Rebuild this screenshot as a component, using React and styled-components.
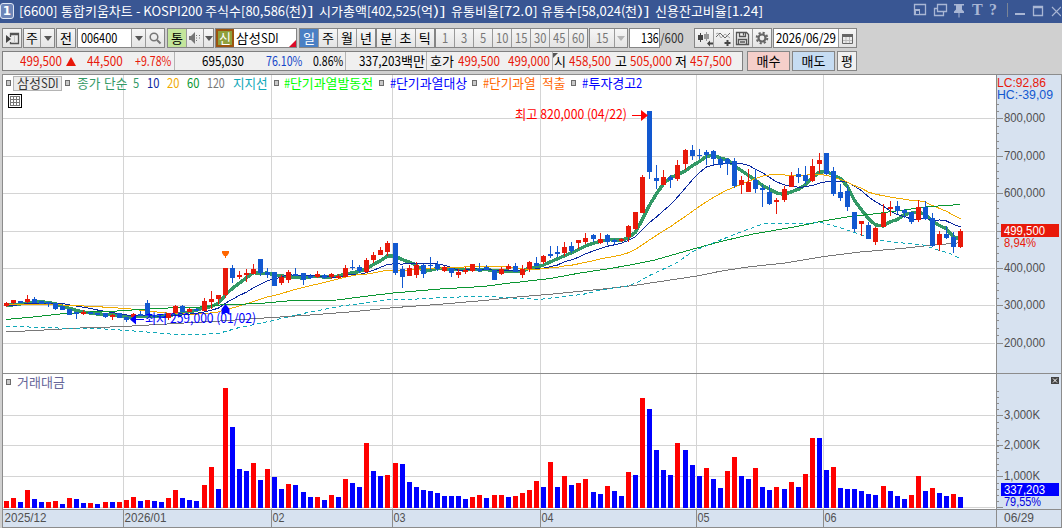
import React, { useLayoutEffect, useRef, useState } from "react";
import styled, { createGlobalStyle, css } from "styled-components";

const FONT = '"Noto Sans CJK KR", "Noto Sans", sans-serif';
const NUM_FONT = '"Liberation Sans", "Noto Sans CJK KR", sans-serif';
const RED = "#e8190a";
const BLUE = "#1258d0";

const GlobalStyle = createGlobalStyle`
  * {
    box-sizing: border-box;
  }
  body {
    margin: 0;
    background: #d0d0d0;
    font-family: ${FONT};
    font-size: 13px;
    overflow: hidden;
  }
`;

const Window = styled.div`
  width: 1062px;
  height: 528px;
  display: flex;
  flex-direction: column;
  background: #d0d0d0;
`;

/* ---------- text ---------- */

const RunBox = styled.span`
  display: inline-block;
  height: 16px;
  line-height: 16px;
  white-space: pre;
  flex: none;
`;

const RunInner = styled.span`
  display: inline-block;
  transform-origin: 0 50%;
  white-space: pre;
`;

const Line = styled.span`
  display: inline-flex;
  flex: none;
  height: 16px;
  font-size: ${(p) => p.$size || 13}px;
  color: ${(p) => p.$color || "inherit"};
  margin-left: ${(p) => p.$ml || 0}px;
`;

const Run = ({ text, width }) => {
  const ref = useRef(null);
  const [scale, setScale] = useState(1);
  useLayoutEffect(() => {
    setScale(width / ref.current.offsetWidth);
  }, [text, width]);
  return (
    <RunBox style={{ width }}>
      <RunInner ref={ref} style={{ transform: `scaleX(${scale})` }}>
        {text}
      </RunInner>
    </RunBox>
  );
};

const Text = ({ children, color, ml, wide = 12, narrow = 6, size }) => {
  const runs = String(children).match(/[가-힣]+|[^가-힣]+/g) || [];
  return (
    <Line $color={color} $ml={ml} $size={size}>
      {runs.map((r, i) => (
        <Run
          key={i}
          text={r}
          width={r.length * (/[가-힣]/.test(r) ? wide : narrow)}
        />
      ))}
    </Line>
  );
};

/* ---------- title bar ---------- */

const TitleBar = styled.div`
  height: 23px;
  flex: none;
  display: flex;
  align-items: center;
  background: #395693;
  color: #fff;
  padding: 0 1px 2px 0;
`;

const Badge = styled.div`
  width: 14px;
  height: 16px;
  margin-right: 5px;
  border: 1px solid #dfe6f4;
  border-radius: 3px;
  background: #6d85b8;
  font: bold 12px/14px "DejaVu Sans", sans-serif;
  text-align: center;
`;

const TitleIcons = styled.svg`
  margin-left: auto;
  flex: none;
`;

/* ---------- toolbar ---------- */

const Toolbar = styled.div`
  display: flex;
  height: 20px;
  flex: none;
  margin: 5px 0 3px 2px;
`;

const Group = styled.div`
  display: flex;
  height: 20px;
  flex: none;
  width: ${(p) => p.$w}px;
  margin-left: ${(p) => p.$ml || 0}px;
  border: 1px solid #858585;
  background: #f0f0f0;
  color: ${(p) => (p.$muted ? "#777" : "#000")};
`;

const Cell = styled.div`
  display: flex;
  align-items: center;
  justify-content: ${(p) => p.$align || "center"};
  ${(p) => (p.$w ? css`width: ${p.$w}px; flex: none;` : css`flex: 1;`)}
  height: 18px;
  padding-left: ${(p) => p.$pl || 0}px;
  background: ${(p) => p.$bg || "linear-gradient(#f6f6f6, #e4e4e4)"};
  color: ${(p) => p.$color || "inherit"};

  & + & {
    border-left: 1px solid ${(p) => (p.$plain ? "transparent" : "#9a9a9a")};
  }
`;

const Total = styled.div`
  display: flex;
  align-items: center;
  width: 34px;
  height: 20px;
  flex: none;
  color: #333;
`;

const StockBadge = styled.div`
  width: 18px;
  height: 18px;
  flex: none;
  display: flex;
  align-items: center;
  justify-content: center;
  border: 2px solid #9c5410;
  background: #8fa03c;
  color: #fff;
`;

const Corner = styled.div`
  width: 0;
  height: 0;
  align-self: flex-end;
  margin-left: auto;
  border-left: 7px solid transparent;
  border-bottom: 7px solid #dc0a28;
`;

const Arrow = styled.i`
  width: 0;
  height: 0;
  border: 4px solid transparent;
  border-bottom: 0;
  border-top: 5px solid ${(p) => (p.$off ? "#b4b4b4" : "#555")};
`;

/* ---------- quote row ---------- */

const QuoteRow = styled.div`
  display: flex;
  height: 20px;
  flex: none;
  margin: 0 0 3px 2px;
`;

const QuoteBox = styled.div`
  display: flex;
  width: 741px;
  height: 20px;
  border: 1px solid #808080;
  background: #f0f0f0;
`;

const Quote = styled.div`
  display: flex;
  align-items: center;
  width: ${(p) => p.$w}px;
  flex: none;
  border-right: 1px solid ${(p) => (p.$last ? "transparent" : "#b4b4b4")};
`;

const UpMark = styled.i`
  border: 5px solid transparent;
  border-top: 0;
  border-bottom: 9px solid ${RED};
  margin: 0 12px 0 4px;
`;

const Notch = styled.i`
  align-self: flex-start;
  border-top: 5px solid #555;
  border-right: 5px solid transparent;
  margin: 1px -4px 0 0;
`;

const OrderButton = styled.div`
  display: flex;
  align-items: center;
  justify-content: center;
  width: ${(p) => p.$w}px;
  height: 20px;
  margin-left: ${(p) => p.$ml}px;
  border: 1px solid #858585;
  background: ${(p) => p.$bg};
`;

/* ---------- chart ---------- */

const Frame = styled.div`
  display: grid;
  grid-template-columns: 993px 66px;
  grid-template-rows: 299px 136px 17px;
  width: 1060px;
  margin-left: 2px;
  border: solid #8c8c8c;
  border-width: 1px 0 1px 1px;

  svg {
    display: block;
    overflow: visible;
  }
`;

const Pane = styled.div`
  position: relative;
  background: #fff;
  border-bottom: 1px solid #8c8c8c;
`;

const Axis = styled.div`
  background: #d7e2f0;
  border: solid #8c8c8c;
  border-width: 0 1px ${(p) => (p.$last ? 0 : 1)}px 1px;
`;

const DateRow = styled.div`
  background: #d7e2f0;
`;

const Legend = styled.div`
  position: absolute;
  top: 0;
  left: 3px;
  display: flex;
  align-items: center;
  height: 15px;
`;

const Bullet = styled.i`
  width: 5px;
  height: 6px;
  flex: none;
  border: 1px solid #6c6c6c;
  background: #c8c8c8;
  margin: 1px 0 0 ${(p) => p.$ml || 0}px;
`;

const NameTag = styled.div`
  display: flex;
  align-items: center;
  width: 49px;
  height: 15px;
  margin: 2px 0 0 2px;
  padding: 0 0 1px 3px;
  border: 1px solid #b4b4b4;
  background: #ececec;
  color: #333;
`;

const GridButton = styled.svg`
  position: absolute;
  left: 5px;
  top: 19px;
`;

// [direction, high row, body top, body bottom, low row]
const CANDLES = `
1 302 303 306 307|1 300 300 303 304|0 301 301 303 303|1 295 299 302 303|0 297 299 303 303
0 301 301 304 304|0 302 302 304 307|0 303 303 309 310|0 306 306 310 310|0 309 309 315 315
0 312 312 314 319|1 310 312 314 315|0 312 312 314 314|0 313 313 315 315|0 313 313 317 318
1 314 315 317 320|0 313 313 318 318|0 317 317 320 322|1 313 314 317 317|0 311 314 316 316
0 300 303 316 316|0 315 315 317 317|0 316 316 318 318|1 313 313 318 320|1 305 306 313 313
0 305 306 312 312|1 308 309 312 312|0 308 309 311 311|1 298 301 311 311|1 291 299 302 309
1 295 295 299 304|1 268 268 295 298|0 265 268 278 283|1 271 275 277 279|1 269 273 275 282
1 264 269 274 274|0 259 259 273 276|0 268 272 275 278|0 272 272 286 286|1 275 277 283 285
1 270 272 280 283|0 268 274 276 276|0 273 273 280 285|0 274 276 278 279|1 271 274 277 278
0 274 275 278 279|1 273 274 277 279|1 274 276 278 279|1 265 268 277 277|0 260 267 268 270
0 265 267 271 273|1 258 260 272 273|1 252 255 260 263|1 247 250 255 255|1 241 243 252 256
0 243 243 273 275|0 266 269 277 288|1 265 268 276 276|1 262 265 275 278|0 264 265 274 278
0 257 265 266 270|0 261 264 269 271|1 266 267 271 272|0 268 268 273 277|1 269 272 275 278
1 267 270 272 274|1 264 264 271 272|0 263 269 271 272|0 265 267 270 270|0 270 270 280 280
1 267 269 274 275|1 264 266 269 270|0 263 266 272 272|1 265 269 275 278|1 261 262 269 272
0 257 263 266 266|1 255 256 262 264|0 246 254 256 258|0 246 252 254 257|1 242 247 253 256
0 242 246 251 253|1 240 240 243 249|1 233 238 242 244|0 234 235 239 242|1 233 239 243 244
0 234 235 242 245|0 239 240 242 245|1 238 239 241 242|1 225 226 237 242|1 212 212 229 230
1 175 177 213 213|0 111 111 172 179|0 165 178 181 189|1 170 177 185 185|0 175 177 180 188
1 160 165 179 181|1 149 150 164 170|0 145 150 156 160|0 149 155 156 159|0 150 152 155 165
0 150 151 159 165|0 157 159 165 168|0 158 159 164 175|0 158 161 186 188|1 176 180 185 194
1 169 182 192 192|0 169 180 189 193|0 185 188 190 207|0 185 192 204 205|1 198 200 202 214
1 186 189 200 202|1 172 176 187 187|0 168 174 177 183|0 166 175 181 184|1 159 166 181 182
1 153 160 164 173|0 153 153 174 175|0 167 171 194 196|0 184 192 198 201|0 186 191 207 211
0 212 212 229 232|1 221 221 224 236|0 222 225 239 239|1 227 228 242 245|1 204 213 227 227
1 201 207 209 216|0 201 206 211 214|0 209 210 213 218|0 212 212 222 224|1 200 207 220 222
0 201 207 219 220|0 213 218 246 247|1 231 234 245 251|0 226 234 238 239|0 232 237 247 253
1 229 231 247 248`
  .trim()
  .split(/[|\n]/)
  .map((c) => c.split(" ").map(Number));

// positive = up day, negative = down day; value is the bar height in thirds of a pixel
const VOLUMES = [
  20, 29, -17, 53, -26, -17, 17, 20, -11, 29, -26, -14, 14, -11, 17, -17, 17,
  23, 32, -20, 23, -20, -17, 29, 53, -29, -23, -20, 68, 122, -56, 359, -242,
  -116, -110, 134, -83, 116, -92, -56, 71, -68, -47, -32, 32, -23, 38, -32, 86,
  -74, -62, 194, -110, -95, 98, 134, -131, -77, -62, -53, -50, -44, -35, -35,
  -35, -26, 32, 38, -29, 38, 38, -32, 35, 44, 53, 80, -62, 137, -62, 95, -68,
  74, 86, -47, -41, 65, -50, -35, 107, -98, 329, -296, -173, -113, -98, 194,
  -173, -128, -95, 119, -86, -59, 110, 152, -95, -86, 119, -62, -53, 62, -56,
  77, -62, 101, 209, -209, -113, 122, -59, -56, -56, -50, -41, -38, 65, -50,
  -35, -26, 38, 95, -50, 59, -44, -35, 41, -32,
];

const barX = (i) => Math.floor(4 + i * 7.073);
const closes = CANDLES.map((c) => (c[0] ? c[2] : c[3]));

const average = (period, head) =>
  closes.map((_, i) => {
    const x = barX(i) + 2.5;
    if (i < period - 1 && head) return [x, head(i)];
    const part = closes.slice(Math.max(0, i - period + 1), i + 1);
    return [x, part.reduce((a, b) => a + b, 0) / part.length];
  });

const toPoints = (list) => list.map(([x, y]) => `${x},${y.toFixed(1)}`).join(" ");

const MA5 = toPoints(average(5, (i) => 305.5 - i * 0.8));
const MA10 = toPoints(average(10, (i) => (i < 3 ? 306 - i * 0.7 : 303.5)));
const MA20 = toPoints(average(20, (i) => 304 + (i * i) / 62));
const MA60 =
  "6,319.5 33,317 60,314 90,312 110,311.5 140,309.5 168,308 200,307 220,305 260,303.5 287,301 337,300 360,297 393,293 440,289 483,286.5 510,283 520,282 550,278.5 580,273 610,268.5 630,265 653,260.5 697,248 720,241.7 753,234 797,226.5 823,221 847,217 873,214 900,210.5 928,206.7 960,204.5";
const MA120 =
  "6,332 35,330.5 80,328 120,326.7 167,324 220,321 260,318.3 310,315 353,311.7 393,307.7 440,304.3 493,299.7 520,296.7 550,294.3 610,288.3 637,285 697,276 720,271.3 750,266.7 783,263.3 823,256.7 857,252.3 903,248.3 927,245.7 950,243.7 960,242.7";
const SUPPORT =
  "6,326.5 43,327.3 73,328.7 100,328.7 120,330 147,332 173,334.3 203,334.3 220,333 240,327.3 260,323.5 303,313.5 343,305.7 373,302 388,299.3 403,300 427,298.3 447,297.3 487,296.3 513,298 540,299.3 563,296.7 587,293.7 600,290 627,286 637,282.7 650,275.3 677,262.7 693,251.3 710,244.3 737,233.3 763,224 787,223.3 807,223.3 822,222.7 843,228.7 857,233.3 877,240 903,243 923,245 937,249.7 950,253.3 960,258.7";

const MONTHS = [
  [3, "2025/12", 42],
  [123, "2026/01", 42],
  [271, "02", 12],
  [392, "03", 12],
  [540, "04", 12],
  [696, "05", 12],
  [823, "06", 12],
];
const PRICE_ROWS = [118, 156, 193, 231, 268, 305, 343];
const VOLUME_ROWS = [415, 445, 476, 507];

const Label = ({ x, y, w, fill = "#505050", korean, children }) => (
  <text
    x={x}
    y={y}
    fill={fill}
    fontSize={korean ? 13 : 13.5}
    fontFamily={korean ? FONT : NUM_FONT}
    textLength={w}
    lengthAdjust="spacingAndGlyphs"
  >
    {children}
  </text>
);

const Grid = ({ rows, top, bottom }) => (
  <g fill="#d4d4d4" shapeRendering="crispEdges">
    {rows.map((y) => (
      <rect key={y} x="3" y={y} width="992" height="1" />
    ))}
    {MONTHS.slice(1).map(([x]) => (
      <rect key={x} x={x} y={top} width="1" height={bottom - top} />
    ))}
  </g>
);

const PriceChart = () => (
  <svg width="993" height="298" viewBox="3 75 993 298">
    <Grid rows={PRICE_ROWS} top={75} bottom={373} />
    <g fill="none" shapeRendering="crispEdges">
      <polyline points={MA5} stroke="#339966" strokeWidth="3.4" />
      <polyline points={MA10} stroke="#0a28a0" />
      <polyline points={MA20} stroke="#f0aa00" />
      <polyline points={MA60} stroke="#0a9632" />
      <polyline points={MA120} stroke="#787878" />
      <polyline points={SUPPORT} stroke="#10a8b8" strokeDasharray="4 3" />
    </g>
    <g shapeRendering="crispEdges">
      {CANDLES.map(([up, high, top, bottom, low], i) => (
        <g key={i} fill={up ? RED : BLUE}>
          <rect x={barX(i) + 2} y={high} width="1" height={low - high} />
          <rect x={barX(i)} y={top} width="5" height={bottom - top} />
        </g>
      ))}
    </g>
    <path d="M222 251h7v2l-2 3h-1v2h-1v-2h-1l-2-3z" fill="#ff6600" />
    <path d="M225.500 304l4 5v5h-2v-1h-4v1h-2v-5z" fill="#0000ff" />
    <path d="M130 319.500l6-5v4.500h8v1h-8v4.500z" fill="#0000ff" />
    <Label x={145} y={323} w={111} fill="#0000ff" korean>
      최저 259,000 (01/02)
    </Label>
    <Label x={515} y={119} w={112} fill="#ff0000" korean>
      최고 820,000 (04/22)
    </Label>
    <path d="M648 115.500l-7-5.500v5h-9v1h9v5z" fill="#ff0000" />
  </svg>
);

const VolumeChart = () => (
  <svg width="993" height="135" viewBox="3 374 993 135">
    <Grid rows={VOLUME_ROWS} top={374} bottom={509} />
    <g shapeRendering="crispEdges">
      {VOLUMES.map((v, i) => {
        const h = Math.round((Math.abs(v) + 1) / 3);
        return (
          <rect
            key={i}
            x={barX(i)}
            y={508 - h}
            width="5"
            height={h}
            fill={v > 0 ? "#ff0000" : "#0000ff"}
          />
        );
      })}
    </g>
  </svg>
);

const Ticks = ({ major, minor }) => (
  <g fill="#8c8c8c" shapeRendering="crispEdges">
    {major.map((y) => (
      <rect key={y} x="997" y={y} width="6" height="1" />
    ))}
    {minor.map((y) => (
      <rect key={y} x="997" y={y} width="2" height="1" />
    ))}
  </g>
);

const range = (from, to, step) => {
  const out = [];
  for (let v = from; v <= to; v += step) out.push(Math.round(v));
  return out;
};

const PriceAxis = () => (
  <svg width="64" height="298" viewBox="997 75 64 298">
    <Ticks major={PRICE_ROWS} minor={range(103.5, 343, 7.48)} />
    <Label x={997} y={87} w={49} fill={RED}>LC:92,86</Label>
    <Label x={997} y={99} w={56} fill={BLUE}>HC:-39,09</Label>
    {[800, 700, 600, null, 400, 300, 200].map(
      (p, i) =>
        p && (
          <Label key={p} x={1004} y={PRICE_ROWS[i] + 4} w={41}>
            {`${p},000`}
          </Label>
        )
    )}
    <rect x="1001" y="224" width="58" height="13" fill={RED} />
    <Label x={1004} y={235} w={41} fill="#fff">499,500</Label>
    <Label x={1004} y={247} w={32} fill={RED}>8,94%</Label>
  </svg>
);

const VolumeAxis = () => (
  <svg width="64" height="135" viewBox="997 374 64 135">
    <Ticks major={VOLUME_ROWS} minor={range(391, 506, 6.1)} />
    <rect x="1051" y="377" width="8" height="7" fill="#444" />
    <path d="M1053 378.500l4 4m0-4l-4 4" stroke="#fff" />
    <Label x={1004} y={419} w={36}>3,000K</Label>
    <Label x={1004} y={449} w={36}>2,000K</Label>
    <Label x={1004} y={480} w={36}>1,000K</Label>
    <rect x="1001" y="483" width="58" height="13" fill="#0000ff" />
    <Label x={1004} y={494} w={41} fill="#fff">337,203</Label>
    <Label x={1004} y={506} w={37} fill="#0000e0">79,55%</Label>
  </svg>
);

/* ---------- icons ---------- */

const WindowIcons = () => (
  <TitleIcons width="148" height="21" viewBox="914 0 148 21" fill="none" stroke="#a9b6d4">
    <path d="M915.500 4.500h11v10h-11z" strokeWidth="1.300" />
    <path d="M915 9h6v6h-6z" fill="#a9b6d4" stroke="none" />
    <path d="M917 11h3v3h-3z" fill="#395693" stroke="none" />
    <path d="M938.500 4.500h9v7h-9zM938 8.500h-2.500v7h9V12" strokeWidth="1.300" />
    <path d="M955 4h10v1.500h-2v4l2 2V13h-4.500v4.500h-1V13H955v-1.500l2-2v-4h-2z" fill="#a9b6d4" stroke="none" />
    <text x="973" y="15" fill="#a9b6d4" stroke="none" fontSize="16" fontWeight="bold" fontFamily="Liberation Serif, serif">T</text>
    <text x="990" y="15" fill="#a9b6d4" stroke="none" fontSize="16" fontWeight="bold" fontFamily="Liberation Serif, serif">?</text>
    <path d="M1008.500 3v14" stroke="#7a8496" />
    <path d="M1016 14h10" strokeWidth="2" />
    <path d="M1034.500 6.500h9v9h-9zM1034 7.500h10" strokeWidth="1.300" />
    <path d="M1053 7l9 9m0-9l-9 9" strokeWidth="1.200" />
  </TitleIcons>
);

const PanelIcon = () => (
  <svg width="16" height="16" fill="none" stroke="#555">
    <path d="M6.500 7V3.500h8v10h-8V12M6 4.500h8" strokeWidth="1.300" />
    <path d="M2 5l5 4-5 4z" fill="#444" stroke="none" />
    <path d="M10.500 6v7" stroke="#c8c8c8" />
  </svg>
);

const SearchIcon = () => (
  <svg width="14" height="14" fill="none" stroke="#777" strokeWidth="1.500">
    <circle cx="6" cy="6" r="3.800" />
    <path d="M9 9l3.500 3.500" strokeWidth="2" />
  </svg>
);

const SpeakerIcon = () => (
  <svg width="14" height="14">
    <path d="M1 5h2l4-4v12L3 9H1z" fill="#777" />
    <path d="M8.500 4v1M8.500 6.500v1M8.500 9v1M11.500 4v1M11.500 6.500v1" stroke="#777" />
  </svg>
);

const CandleIcon = () => (
  <svg width="17" height="17">
    <path d="M2 5h5v5H2zM4 3h1v9H4z" fill="#444" />
    <path d="M8 4h5v5H8zM10 2h1v9h-1z" fill="#999" />
    <path d="M11 13.500l3-3v2h3v2h-3v2z" fill="#444" />
  </svg>
);

const LineIcon = () => (
  <svg width="17" height="17" fill="none" stroke="#666">
    <path d="M1 7l4-4 5 5 5-5" />
    <path d="M1 4l2-1 3 5 4-4 5 4" stroke="#aaa" />
    <path d="M9.500 13h6M12.500 10v6" stroke="#444" strokeWidth="2" />
  </svg>
);

const SaveIcon = () => (
  <svg width="15" height="15" fill="none" stroke="#555" strokeWidth="1.300">
    <path d="M1.500 1.500h10l2 2v10h-12zM4.500 1.500v4h6v-4M3.500 13.500v-5h8v5M5 11h5" />
    <path d="M8.500 2v2.500" />
  </svg>
);

const GearIcon = () => (
  <svg width="14" height="14" fill="none" stroke="#666">
    <circle cx="7" cy="7" r="3.500" strokeWidth="2.200" />
    <circle cx="7" cy="7" r="5.300" strokeWidth="2" strokeDasharray="2.160 2" />
  </svg>
);

const CalendarIcon = () => (
  <svg width="13" height="13" fill="none" stroke="#666">
    <path d="M1.500 2.500h10v9h-10z" />
    <path d="M1 3.500h11" strokeWidth="3" />
    <path d="M5 5v6M8.500 5v6M2 8.500h9" stroke="#bbb" />
  </svg>
);

const PERIODS = ["일", "주", "월", "년"];
const UNITS = ["분", "초", "틱"];
const MINUTES = ["1", "3", "5", "10", "15", "30", "45", "60"];

const App = () => (
  <>
    <GlobalStyle />
    <Window>
      <TitleBar>
        <Badge>1</Badge>
        <Text>
          {"[6600] 통합키움차트 - KOSPI200 주식수[80,586(천)] 시가총액[402,525(억)] 유통비율[72.0] 유통수[58,024(천)] 신용잔고비율[1.24]"}
        </Text>
        <WindowIcons />
      </TitleBar>

      <Toolbar>
        <Group $w={20}><Cell><PanelIcon /></Cell></Group>
        <Group $w={32} $ml={1}>
          <Cell $w={16}><Text>주</Text></Cell>
          <Cell><Arrow /></Cell>
        </Group>
        <Group $w={20} $ml={1}><Cell><Text>전</Text></Cell></Group>
        <Group $w={88} $ml={1}>
          <Cell $w={53} $bg="#fff" $align="flex-start" $pl={3}><Text>006400</Text></Cell>
          <Cell $w={14} $plain><Arrow /></Cell>
          <Cell><SearchIcon /></Cell>
        </Group>
        <Group $w={47} $ml={2}>
          <Cell $w={18} $bg="#c3e59b"><Text>통</Text></Cell>
          <Cell $w={17} $plain><SpeakerIcon /></Cell>
          <Cell><Arrow /></Cell>
        </Group>
        <Group $w={82} $ml={1}>
          <StockBadge><Text>신</Text></StockBadge>
          <Cell $bg="#fff" $align="flex-start" $pl={2}>
            <Text wide={12.5}>삼성SDI</Text>
            <Corner />
          </Cell>
        </Group>
        <Group $w={77} $ml={2}>
          {PERIODS.map((p, i) => (
            <Cell key={p} $bg={i ? undefined : "#4a80c4"} $color={i ? undefined : "#fff"}>
              <Text>{p}</Text>
            </Cell>
          ))}
        </Group>
        <Group $w={59}>
          {UNITS.map((u) => (
            <Cell key={u}><Text>{u}</Text></Cell>
          ))}
        </Group>
        <Group $w={153} $muted>
          {MINUTES.map((m) => (
            <Cell key={m}><Text>{m}</Text></Cell>
          ))}
        </Group>
        <Group $w={39} $ml={1} $muted>
          <Cell $w={24}><Text>15</Text></Cell>
          <Cell><Arrow $off /></Cell>
        </Group>
        <Group $w={31} $ml={1}>
          <Cell $bg="#fff" $align="flex-end"><Text>136</Text></Cell>
        </Group>
        <Total><Text>/600</Text></Total>
        <Group $w={78}>
          <Cell><CandleIcon /></Cell>
          <Cell><LineIcon /></Cell>
          <Cell><SaveIcon /></Cell>
          <Cell><GearIcon /></Cell>
        </Group>
        <Group $w={84} $ml={1}>
          <Cell $w={64} $bg="#fff"><Text>2026/06/29</Text></Cell>
          <Cell><CalendarIcon /></Cell>
        </Group>
      </Toolbar>

      <QuoteRow>
        <QuoteBox>
          <Quote $w={172}>
            <Text color={RED} ml={17}>499,500</Text>
            <UpMark />
            <Text color={RED} ml={-1}>44,500</Text>
            <Text color={RED} ml={12}>+9.78%</Text>
          </Quote>
          <Quote $w={171}>
            <Text ml={27}>695,030</Text>
            <Text color="#1446c8" ml={22}>76.10%</Text>
            <Text ml={11}>0.86%</Text>
          </Quote>
          <Quote $w={81}>
            <Text ml={13}>337,203백만</Text>
          </Quote>
          <Quote $w={126}>
            <Text ml={3}>호가</Text>
            <Text color={RED} ml={4}>499,500</Text>
            <Text color={RED} ml={8}>499,000</Text>
          </Quote>
          <Quote $w={188} $last>
            <Notch />
            <Text>시</Text>
            <Text color={RED} ml={3}>458,500</Text>
            <Text ml={4}>고</Text>
            <Text color={RED} ml={3}>505,000</Text>
            <Text ml={3}>저</Text>
            <Text color={RED} ml={3}>457,500</Text>
          </Quote>
        </QuoteBox>
        <OrderButton $w={43} $ml={4} $bg="#f5cfca"><Text>매수</Text></OrderButton>
        <OrderButton $w={43} $ml={2} $bg="#c6dcf2"><Text>매도</Text></OrderButton>
        <OrderButton $w={20} $ml={2} $bg="#f0f0f0"><Text>평</Text></OrderButton>
      </QuoteRow>

      <Frame>
        <Pane>
          <PriceChart />
          <Legend>
            <Bullet />
            <NameTag><Text>삼성SDI</Text></NameTag>
            <Bullet $ml={3} />
            <Text color="#339966" ml={7} wide={11.7}>종가</Text>
            <Text color="#339966" ml={4} wide={11.7}>단순</Text>
            <Text color="#339966" ml={5}>5</Text>
            <Text color="#0a28a0" ml={8}>10</Text>
            <Text color="#f0aa00" ml={8}>20</Text>
            <Text color="#0a9632" ml={8}>60</Text>
            <Text color="#787878" ml={8}>120</Text>
            <Text color="#10a8b8" ml={8} wide={11.6}>지지선</Text>
            <Bullet $ml={6} />
            <Text color="#00ff00" ml={5} wide={11.9}>#단기과열발동전</Text>
            <Bullet $ml={6} />
            <Text color="#0000ff" ml={6} wide={11.9}>#단기과열대상</Text>
            <Bullet $ml={5} />
            <Text color="#ff6600" ml={6} wide={11.7}>#단기과열 적출</Text>
            <Bullet $ml={6} />
            <Text color="#0000ff" ml={6} wide={12}>#투자경고2</Text>
          </Legend>
          <GridButton width="14" height="14" fill="none" stroke="#777">
            <rect x=".5" y=".5" width="13" height="13" stroke="#000" fill="#fff" />
            <path d="M2.500 2.500h9v9h-9zM5.500 3v9M8.500 3v9M2 5.500h9M2 8.500h9" shapeRendering="crispEdges" />
          </GridButton>
        </Pane>
        <Axis><PriceAxis /></Axis>
        <Pane>
          <VolumeChart />
          <Legend>
            <Bullet />
            <Text color="#666699" ml={6}>거래대금</Text>
          </Legend>
        </Pane>
        <Axis><VolumeAxis /></Axis>
        <DateRow>
          <svg width="993" height="17" viewBox="3 510 993 17">
            {MONTHS.map(([x, label, w], i) => (
              <g key={label}>
                {i > 0 && <rect x={x} y="510" width="1" height="17" fill="#8c8c8c" />}
                <Label x={x + 1.500} y={522} w={w}>{label}</Label>
              </g>
            ))}
          </svg>
        </DateRow>
        <Axis $last>
          <svg width="64" height="17" viewBox="997 510 64 17">
            <Label x={1004} y={522} w={30}>06/29</Label>
          </svg>
        </Axis>
      </Frame>
    </Window>
  </>
);

export default App;
